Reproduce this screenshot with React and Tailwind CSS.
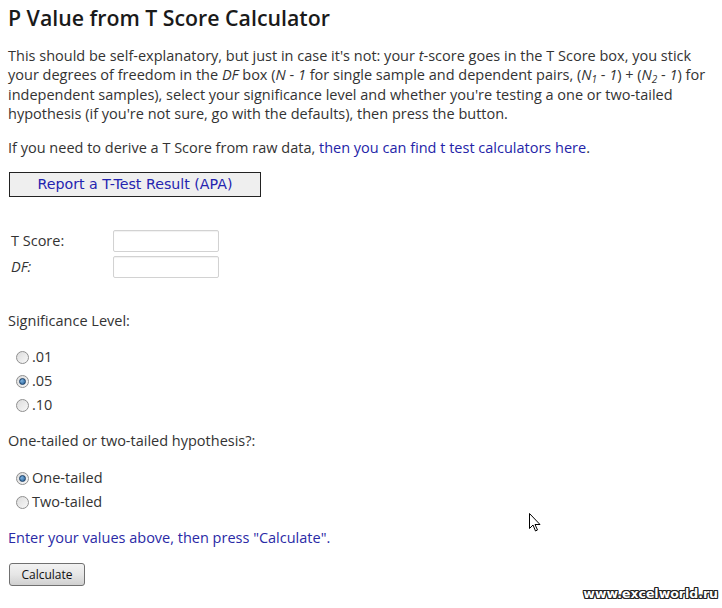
import React, { useState } from 'react';

function Radio({ checked, label, onClick }) {
  return (
    <label className="flex items-center h-6 cursor-pointer" onClick={onClick}>
      <span className="ml-[8px] w-[13px] h-[13px] rounded-full border border-[#8f8f8f] bg-gradient-to-br from-[#dcdcdc] to-[#f8f8f8] flex items-center justify-center">
        {checked && <span className="w-[7px] h-[7px] rounded-full bg-[radial-gradient(circle_at_35%_35%,#7fb3e0,#1f5a92)] border border-[#1c3f66]" />}
      </span>
      <span className="ml-[3px]">{label}</span>
    </label>
  );
}

export default function App() {
  const [sig, setSig] = useState('.05');
  const [tails, setTails] = useState('one');
  const [tScore, setTScore] = useState('');
  const [df, setDf] = useState('');

  return (
    <div className="relative min-h-[608px] bg-white px-2 text-[14.5px] leading-[19.4px] text-[#333] font-['Open_Sans','Liberation_Sans',sans-serif]">
      <h1 className="pt-1 text-[21.3px] leading-[28px] font-semibold text-[#1a1a1a]">P Value from T Score Calculator</h1>

      <p className="mt-[14px] whitespace-nowrap">
        <span className="block">This should be self-explanatory, but just in case it's not: your <i>t</i>-score goes in the T Score box, you stick</span>
        <span className="block">your degrees of freedom in the <i>DF</i> box (<i>N</i> - <i>1</i> for single sample and dependent pairs, (<i>N<sub className="text-[10px]">1</sub></i> - <i>1</i>) + (<i>N<sub className="text-[10px]">2</sub></i> - <i>1</i>) for</span>
        <span className="block">independent samples), select your significance level and whether you're testing a one or two-tailed</span>
        <span className="block">hypothesis (if you're not sure, go with the defaults), then press the button.</span>
      </p>

      <p className="mt-[14px]">
        If you need to derive a T Score from raw data, <a href="#" className="text-[#2424a8]">then you can find t test calculators here</a>.
      </p>

      <button className="mt-[15px] ml-px w-[252px] h-[25px] bg-[#efefef] border border-[#222] text-[#2424b0] text-[14.2px] font-['DejaVu_Sans',Verdana,sans-serif]">
        Report a T-Test Result (APA)
      </button>

      <div className="mt-[33px] flex flex-col gap-1">
        <div className="flex items-center">
          <span className="w-[105px] pl-[3px]">T Score:</span>
          <input value={tScore} onChange={(e) => setTScore(e.target.value)} className="w-[106px] h-[22px] border border-[#d2d2d2] rounded-[2px] outline-none px-1 shadow-[inset_0_1px_1px_rgba(0,0,0,0.06)]" />
        </div>
        <div className="flex items-center">
          <span className="w-[105px] pl-[3px] italic">DF:</span>
          <input value={df} onChange={(e) => setDf(e.target.value)} className="w-[106px] h-[22px] border border-[#d2d2d2] rounded-[2px] outline-none px-1 shadow-[inset_0_1px_1px_rgba(0,0,0,0.06)]" />
        </div>
      </div>

      <p className="mt-[33px] leading-[20px]">Significance Level:</p>
      <div className="mt-[14px]">
        {['.01', '.05', '.10'].map((v) => (
          <Radio key={v} label={v} checked={sig === v} onClick={() => setSig(v)} />
        ))}
      </div>

      <p className="mt-[14px] leading-[20px]">One-tailed or two-tailed hypothesis?:</p>
      <div className="mt-[15px]">
        <Radio label="One-tailed" checked={tails === 'one'} onClick={() => setTails('one')} />
        <Radio label="Two-tailed" checked={tails === 'two'} onClick={() => setTails('two')} />
      </div>

      <p className="mt-[14px] leading-[20px] text-[#2a2aa6]">Enter your values above, then press "Calculate".</p>

      <button className="mt-[15px] ml-px w-[76px] h-[23px] rounded-[3px] border border-[#707070] bg-gradient-to-b from-[#f2f2f2] via-[#e6e6e6] to-[#d0d0d0] text-[12px] text-[#111]">
        Calculate
      </button>

      <svg className="absolute left-[529px] top-[513px]" width="12" height="19" viewBox="0 0 12 19">
        <path d="M0.5 0.5 L0.5 15.5 L4 12 L6.5 18 L8.5 17 L6 11.5 L11 11.5 Z" fill="#fff" stroke="#000" strokeWidth="1" strokeLinejoin="round" />
      </svg>

      <div className="absolute right-[4px] top-[584px] text-[12.5px] font-bold text-white font-['DejaVu_Sans',Verdana,sans-serif] [text-shadow:-1px_-1px_0_#222,1px_-1px_0_#222,-1px_1px_0_#222,1px_1px_0_#222,0_1px_0_#222,0_-1px_0_#222,1px_0_0_#222,-1px_0_0_#222]">
        www.excelworld.ru
      </div>
    </div>
  );
}
